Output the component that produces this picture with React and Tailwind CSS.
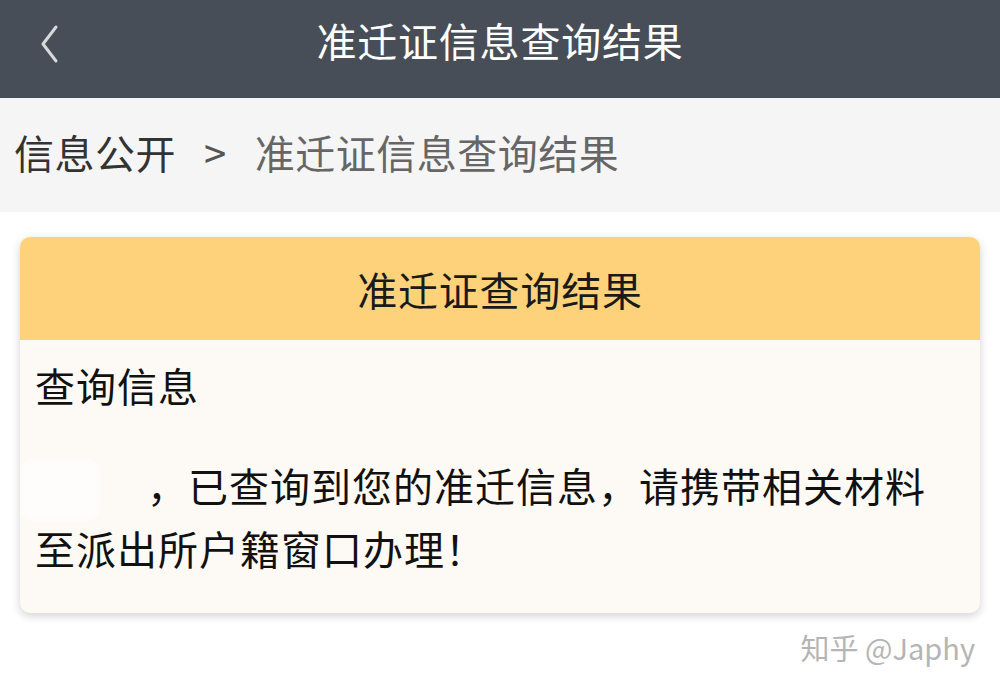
import React from 'react';

/**
 * Relocation permit query result page (mobile view)
 */
const App = () => {
	return (
		<div
			className="w-[1000px] h-[697px] bg-white overflow-hidden"
			style={{ fontFamily: '"Noto Sans CJK SC", "Noto Sans", sans-serif' }}
		>
			{/* Top bar */}
			<div className="relative h-[98px] bg-[#474e57] flex justify-center pt-[10px]">
				<button className="absolute left-[36px] top-[24px] w-[26px] h-[40px] flex items-center justify-center">
					<svg width="22" height="40" viewBox="0 0 22 40" fill="none">
						<path d="M18 3 L5 20 L18 37" stroke="#d6d8db" strokeWidth="3" strokeLinecap="round" strokeLinejoin="round" />
					</svg>
				</button>
				<h1 className="text-[40px] leading-[60px] tracking-[0.8px] text-white font-normal">准迁证信息查询结果</h1>
			</div>

			{/* Breadcrumb */}
			<div className="h-[114px] bg-[#f5f5f5] flex items-center pl-[14px] pb-[6px] text-[40px] leading-[60px] tracking-[0.5px]">
				<span className="text-[#333333]">信息公开</span>
				<span className="text-[#555555] mx-[28px]">&gt;</span>
				<span className="text-[#666666]">准迁证信息查询结果</span>
			</div>

			{/* Result card */}
			<div className="mx-[20px] mt-[25px] rounded-[10px] overflow-hidden bg-[#fdf9f4] shadow-[0_3px_10px_rgba(0,0,0,0.18)]">
				<div className="h-[103px] bg-[#fdd27b] flex items-center justify-center">
					<h2 className="text-[40px] leading-[60px] tracking-[0.8px] text-[#1a1a1a] font-normal">准迁证查询结果</h2>
				</div>
				<div className="px-[15px] pt-[17px] pb-[36px] text-[40px] leading-[57px] tracking-[1px] text-[#111111]">
					<p>查询信息</p>
					<p className="mt-[43px]">
						<span className="inline-block align-middle w-[112px] h-[57px] relative">
							<span className="absolute left-[-15px] top-[-4px] w-[80px] h-[62px] rounded-[12px] bg-white/70 blur-[4px]" />
						</span>
						，已查询到您的准迁信息，请携带相关材料
						<br />
						至派出所户籍窗口办理！
					</p>
				</div>
			</div>

			{/* Watermark */}
			<div className="flex justify-end pr-[25px] mt-[14px]">
				<span className="text-[29px] leading-[40px] text-[#b5b5b5]">知乎 @Japhy</span>
			</div>
		</div>
	);
};

export default App;
